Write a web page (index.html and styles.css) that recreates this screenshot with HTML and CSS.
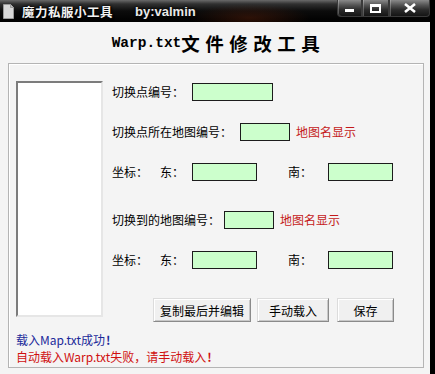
FILE: index.html
```html
<!DOCTYPE html>
<html lang="zh">
<head>
    <meta charset="UTF-8">
    <title>魔力私服小工具</title>
    <link rel="stylesheet" href="styles.css">
</head>
<body>
    <div class="window">
        <div class="titlebar">
            <svg class="app-icon" width="11" height="15" viewBox="0 0 11 15">
                <path d="M0.5 0.5 H7.5 L10.5 3.5 V14.5 H0.5 Z" fill="#d8d8d8" stroke="#9a9a9a"/>
                <path d="M7.5 0.5 V3.5 H10.5" fill="#bcbcbc" stroke="#9a9a9a"/>
            </svg>
            <span class="title-text">魔力私服小工具</span>
            <span class="title-by">by:valmin</span>
            <div class="caption-buttons">
                <div class="cap-btn cap-min"><span></span></div>
                <div class="cap-btn cap-max"><span></span></div>
                <div class="cap-btn cap-close">
                    <svg width="12" height="10" viewBox="0 0 12 10">
                        <path d="M1 1 L11 9 M11 1 L1 9" stroke="#fff" stroke-width="2.6"/>
                    </svg>
                </div>
            </div>
        </div>

        <div class="client">
            <h1 class="heading"><span class="heading-en">Warp.txt</span><span class="heading-cn">文件修改工具</span></h1>

            <div class="groupbox">
                <div class="main">
                    <div class="listbox"></div>

                    <div class="form">
                        <div class="row row-1">
                            <span class="label">切换点编号：</span>
                            <input type="text" class="field field-long">
                        </div>
                        <div class="row row-2">
                            <span class="label">切换点所在地图编号：</span>
                            <input type="text" class="field field-short">
                            <span class="map-name">地图名显示</span>
                        </div>
                        <div class="row row-3">
                            <span class="label">坐标：</span>
                            <span class="dir dir-east">东：</span>
                            <input type="text" class="field field-coord">
                            <span class="dir dir-south">南：</span>
                            <input type="text" class="field field-coord">
                        </div>
                        <div class="row row-4">
                            <span class="label">切换到的地图编号：</span>
                            <input type="text" class="field field-short">
                            <span class="map-name">地图名显示</span>
                        </div>
                        <div class="row row-5">
                            <span class="label">坐标：</span>
                            <span class="dir dir-east">东：</span>
                            <input type="text" class="field field-coord">
                            <span class="dir dir-south">南：</span>
                            <input type="text" class="field field-coord">
                        </div>
                        <div class="buttons">
                            <button class="btn btn-copy">复制最后并编辑</button>
                            <button class="btn btn-load">手动载入</button>
                            <button class="btn btn-save">保存</button>
                        </div>
                    </div>
                </div>

                <div class="messages">
                    <p class="msg msg-ok">载入Map.txt成功<b>!</b></p>
                    <p class="msg msg-fail">自动载入Warp.txt失败，请手动载入<b>!</b></p>
                </div>
            </div>
        </div>
    </div>
</body>
</html>
```

FILE: styles.css
```css
body {
    margin: 0;
    padding: 0;
    width: 435px;
    height: 374px;
    overflow: hidden;
    font-family: "Noto Sans CJK SC", "Liberation Sans", sans-serif;
    font-size: 12px;
    color: #000;
}
.window {
    display: flex;
    flex-direction: column;
    width: 435px;
    height: 374px;
    border-right: 5px solid #000;
    box-sizing: border-box;
    background: #f4f4f4;
}

/* Title bar */
.titlebar {
    position: relative;
    display: flex;
    align-items: center;
    height: 22px;
    flex-shrink: 0;
    background:
        radial-gradient(ellipse 60px 14px at 250px 18px, rgba(120, 40, 10, 0.35), transparent),
        linear-gradient(#6a6a6a 0, #303030 4px, #0c0c0c 11px, #000 22px);
}
.app-icon {
    margin-left: 3px;
    margin-top: 1px;
}
.title-text {
    margin-left: 8px;
    font-size: 12.5px;
    font-weight: bold;
    color: #f2f2f2;
    letter-spacing: 0.5px;
    text-shadow: 0 0 2px #000, 0 0 3px #000, 1px 1px 1px #000;
}
.title-by {
    margin-left: 22px;
    font-family: "Liberation Sans", sans-serif;
    font-size: 13px;
    font-weight: bold;
    color: #e8e8e8;
    text-shadow: 0 0 2px #000, 0 0 3px #000;
}
.caption-buttons {
    position: absolute;
    top: 0;
    left: 337px;
    display: flex;
    height: 17px;
}
.cap-btn {
    display: flex;
    justify-content: center;
    align-items: center;
    height: 17px;
    box-sizing: border-box;
    border: 1px solid #3a3a3a;
    border-top: none;
    background: linear-gradient(#8a8a8a 0, #555 5px, #2a2a2a 10px, #111 17px);
    box-shadow: inset 1px 0 rgba(255, 255, 255, 0.25);
}
.cap-min {
    width: 25px;
    border-radius: 0 0 0 4px;
}
.cap-min span {
    width: 9px;
    height: 3px;
    margin-top: 5px;
    background: #fff;
}
.cap-max {
    width: 27px;
}
.cap-max span {
    width: 7px;
    height: 4px;
    border: 2px solid #fff;
    border-top-width: 3px;
}
.cap-close {
    width: 41px;
    border-radius: 0 0 4px 0;
}

/* Client area */
.client {
    flex: 1;
    display: flex;
    flex-direction: column;
}
.heading {
    display: flex;
    justify-content: center;
    align-items: center;
    height: 41px;
    margin: 0;
    padding-left: 2px;
    box-sizing: border-box;
    font-weight: bold;
}
.heading-en {
    font-family: "Liberation Mono", monospace;
    font-size: 14.5px;
}
.heading-cn {
    font-size: 18.5px;
    letter-spacing: 5.5px;
    margin-right: -5px;
}
.groupbox {
    width: 416px;
    height: 305px;
    margin-left: 8px;
    box-sizing: border-box;
    border: 1px solid #b4b4b4;
    box-shadow: inset 1px 1px #fff;
    padding: 17px 0 0 7px;
}
.main {
    display: flex;
}
.listbox {
    width: 87px;
    height: 236px;
    box-sizing: border-box;
    background: #fff;
    border: 2px solid;
    border-color: #7c7c7c #e6e6e6 #e6e6e6 #7c7c7c;
}
.form {
    margin-left: 9px;
    padding-top: 2px;
}
.row {
    display: flex;
    align-items: center;
    height: 18px;
    line-height: 18px;
}
.row-2, .row-3, .row-5 {
    margin-top: 22px;
}
.row-4 {
    margin-top: 30px;
}
.label {
    white-space: nowrap;
}
.row-1 .field {
    margin-left: 8px;
}
.row-2 .field {
    margin-left: 8px;
}
.row-4 .field {
    margin-left: 4px;
}
.field {
    height: 18px;
    padding: 0;
    box-sizing: border-box;
    border: 1px solid #1c1c1c;
    background: #ccffcc;
    outline: none;
}
.field-long {
    width: 81px;
}
.field-short {
    width: 50px;
}
.field-coord {
    width: 65px;
}
.dir-east {
    margin-left: 12px;
    margin-right: 8px;
}
.dir-south {
    margin-left: 31px;
    margin-right: 16px;
}
.map-name {
    margin-left: 6px;
    color: #c41a1a;
}
.buttons {
    display: flex;
    margin-top: 29px;
    margin-left: 41px;
}
.btn {
    height: 24px;
    padding: 0;
    font-family: "Noto Sans CJK SC", sans-serif;
    font-size: 12px;
    color: #000;
    background: #f0f0f0;
    border: 1px solid;
    border-color: #dcdcdc #8a8a8a #8a8a8a #dcdcdc;
    box-shadow: inset 1px 1px #fff, inset -1px -1px #c8c8c8;
}
.btn-copy {
    width: 98px;
}
.btn-load {
    width: 72px;
    margin-left: 6px;
}
.btn-save {
    width: 57px;
    margin-left: 8px;
}
.messages {
    margin-top: 9px;
}
.msg {
    margin: 0;
    height: 17px;
    line-height: 17px;
}
.msg b {
    margin-left: 1px;
}
.msg-ok {
    color: #1c2a9a;
}
.msg-fail {
    color: #d01010;
}
```
